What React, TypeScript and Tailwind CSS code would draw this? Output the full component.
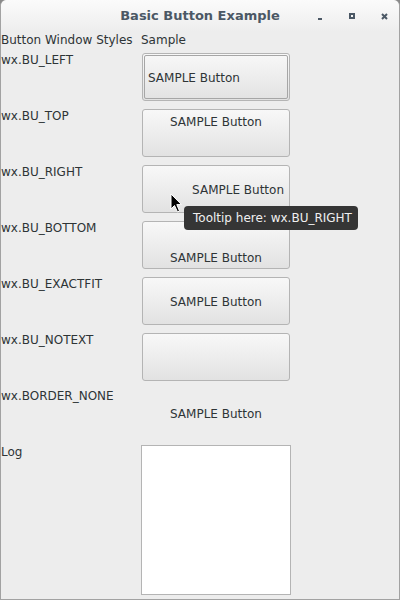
import React from "react";

const rows = [
  { label: "wx.BU_LEFT", align: "justify-start items-center pl-[3px] pt-[2px]", focus: true, text: true },
  { label: "wx.BU_TOP", align: "justify-center items-start pt-[4px]", text: true },
  { label: "wx.BU_RIGHT", align: "justify-end items-center pr-[4px] pt-[2px]", text: true },
  { label: "wx.BU_BOTTOM", align: "justify-center items-end pb-[2px]", text: true },
  { label: "wx.BU_EXACTFIT", align: "justify-center items-center pt-[2px]", text: true },
  { label: "wx.BU_NOTEXT", align: "justify-center items-center", text: false },
];

function SampleButton({ align, focus, text }: { align: string; focus?: boolean; text: boolean }) {
  return (
    <div className="ml-[1px] w-[148px] h-[48px] rounded-[3px] border border-[#b4b4b4] bg-gradient-to-b from-[#f8f8f8] to-[#e2e2e2] p-[1px]">
      <div
        className={
          "flex h-full w-full rounded-[2px] leading-[14px] " +
          align +
          (focus ? " border border-[#a6a6a6]" : "")
        }
      >
        {text && <span>SAMPLE Button</span>}
      </div>
    </div>
  );
}

export default function App() {
  return (
    <div className="w-[400px] h-[600px] bg-[#8a8a8a]">
      <div
        className="relative flex h-[600px] w-[400px] flex-col rounded-t-[6px] border-x border-b border-[#a2a2a2] bg-[#ededed] text-[12px] text-[#2e3436]"
        style={{ fontFamily: '"DejaVu Sans", sans-serif' }}
      >
        {/* title bar */}
        <div className="grid h-[32px] grid-cols-[1fr_auto_1fr] items-center rounded-t-[6px] bg-gradient-to-b from-[#fbfbfb] to-[#ededed]">
          <div />
          <div className="text-[13px] font-bold text-[#4b5865]">Basic Button Example</div>
          <div className="flex items-center">
            <div className="ml-[38px] mt-[5px] h-[2px] w-[4px] bg-[#4b5865]" />
            <div className="ml-[27px] h-[6px] w-[6px] border-2 border-[#4b5865]" />
            <svg className="ml-[26px]" width="7" height="7" viewBox="0 0 7 7">
              <path d="M1 1L6 6M6 1L1 6" stroke="#4b5865" strokeWidth="2" />
            </svg>
          </div>
        </div>

        {/* header */}
        <div className="mt-[1px] grid h-[14px] grid-cols-[140px_1fr] leading-[14px]">
          <span>Button Window Styles</span>
          <span>Sample</span>
        </div>

        <div className="mt-[6px] grid grid-cols-[140px_1fr] gap-y-[8px] leading-[14px]">
          {rows.map((r) => (
            <React.Fragment key={r.label}>
              <span>{r.label}</span>
              <SampleButton align={r.align} focus={r.focus} text={r.text} />
            </React.Fragment>
          ))}
          <span>wx.BORDER_NONE</span>
          <div className="ml-[1px] flex h-[48px] w-[148px] items-center justify-center pt-[2px]">SAMPLE Button</div>
          <span>Log</span>
          <div className="h-[150px] w-[150px] border border-[#b4b4b4] bg-white" />
        </div>

        {/* cursor */}
        <svg className="absolute left-[169px] top-[193px]" width="14" height="21" viewBox="0 0 14 21">
          <path d="M1 1L1 16L4.5 12.5L7.5 19L9.5 18L6.8 11.6L11.5 11.6Z" fill="#000" stroke="#fff" strokeWidth="1" />
        </svg>

        {/* tooltip */}
        <div className="absolute left-[183px] top-[206px] flex h-[24px] w-[174px] items-center rounded-[4px] bg-[#353535] pl-[9px] text-[12px] text-[#f0f0f0]">
          Tooltip here: wx.BU_RIGHT
        </div>
      </div>
    </div>
  );
}
